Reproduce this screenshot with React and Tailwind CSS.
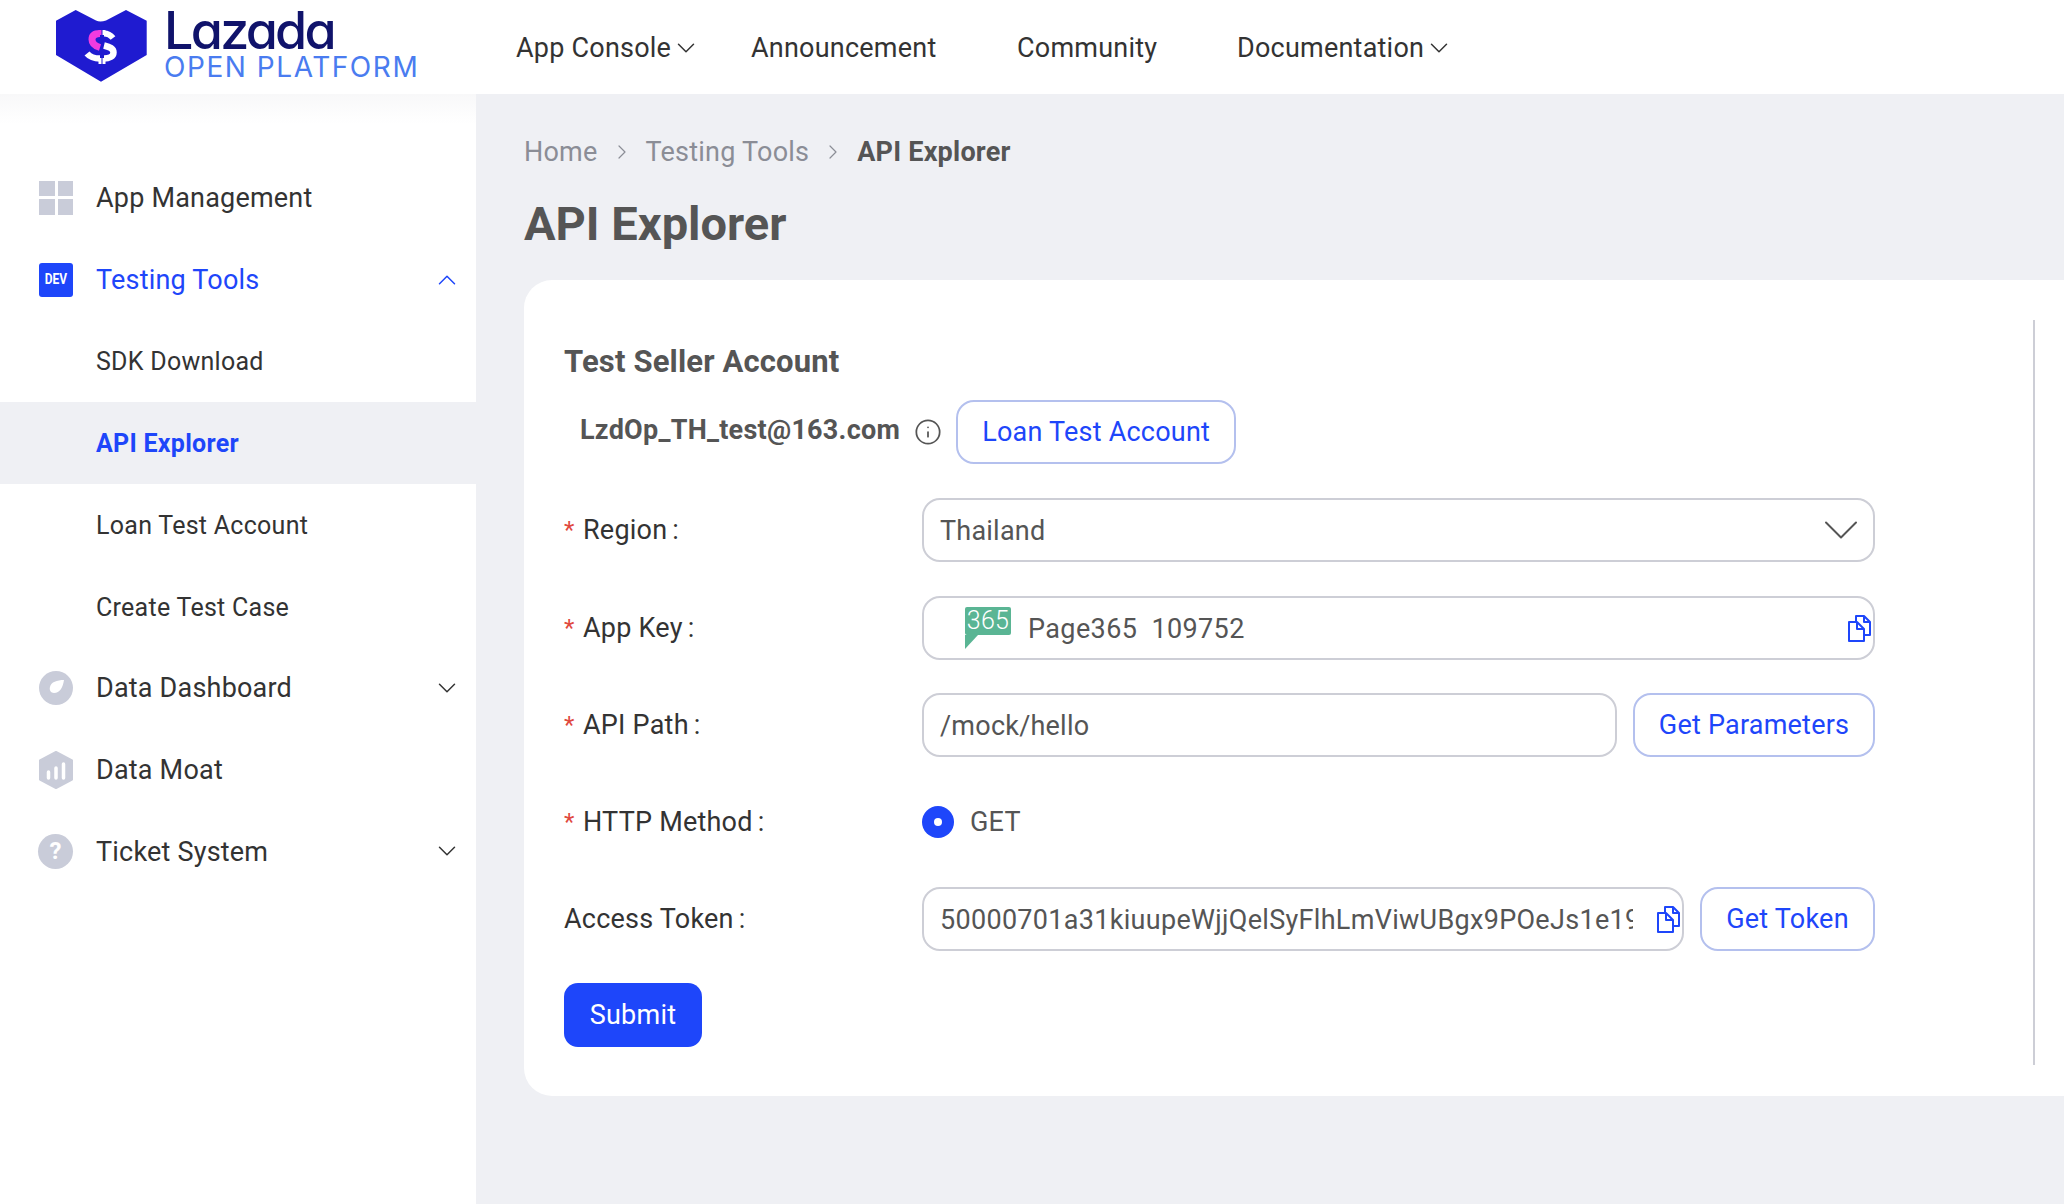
import { ChevronDown, ChevronUp, ChevronRight, Info } from 'lucide-react';

const font = { fontFamily: 'Roboto, sans-serif' };

function CopyIcon() {
    return (
        <svg width="24" height="28" viewBox="0 0 24 28" fill="none" stroke="#1e46fa" strokeWidth="2" strokeLinejoin="round">
            <path d="M9 7V2h8l6 6v13h-6" />
            <path d="M17 2v6h6" />
            <path d="M2 8h8l7 7v12H2z" fill="#fff" />
            <path d="M10 8v7h7" />
        </svg>
    );
}

function LazadaMark() {
    return (
        <svg width="91" height="72" viewBox="0 0 91 72">
            <path d="M0 10.7 L19.7 0 L40 10.5 Q44 12.3 50 10.5 L70 0 L90.7 10.7 L90.7 45 L45 71.7 L0 45 Z" fill="#1f1bd0" />
            <path d="M44 23.5C38 23.5 36 26 36 29.5C36 33.5 39 36 44 37.5" fill="none" stroke="#f23be0" strokeWidth="7" />
            <path d="M44 20v5" stroke="#f23be0" strokeWidth="3" />
            <path d="M48 23.5C52 23.5 55 25.5 57 28" fill="none" stroke="#fff" strokeWidth="6" />
            <path d="M48 20v5" stroke="#fff" strokeWidth="3" />
            <path d="M48 35.5C54 37 57.5 38.5 57.5 42.5C57.5 46.5 53 48.5 48 48.5" fill="none" stroke="#fff" strokeWidth="6.5" />
            <path d="M31 43.5C34 47 38 48.5 44 48.5" fill="none" stroke="#fff" strokeWidth="6.5" />
            <path d="M44 48v6M48 48v6" stroke="#fff" strokeWidth="3" />
        </svg>
    );
}

function GridIcon() {
    return (
        <div className="grid grid-cols-2 gap-[3px] w-[34px] h-[34px]">
            <div className="bg-[#c9ccd9]" />
            <div className="bg-[#c9ccd9]" />
            <div className="bg-[#c9ccd9]" />
            <div className="bg-[#c9ccd9]" />
        </div>
    );
}

function DevIcon() {
    return (
        <div className="w-[34px] h-[34px] rounded-[3px] bg-[#1e46fa] flex items-center justify-center text-white">
            <span className="text-[15px] font-bold scale-x-[0.8]">DEV</span>
        </div>
    );
}

function GaugeIcon() {
    return (
        <svg width="34" height="34" viewBox="0 0 34 34">
            <circle cx="17" cy="17" r="17" fill="#c9ccd9" />
            <path d="M25 9c-7 0-13 2-14 7-1 3 1 6 4 6 6 0 9-6 10-13z" fill="#fff" />
        </svg>
    );
}

function HexIcon() {
    return (
        <svg width="36" height="38" viewBox="0 0 36 38" className="-ml-[1px]">
            <path d="M18 1l16 8.5v19L18 37 2 28.500V9.500z" fill="#c9ccd9" stroke="#c9ccd9" strokeWidth="2" strokeLinejoin="round" />
            <path d="M10.500 21v6M18 17v10M25.500 13v14" stroke="#fff" strokeWidth="3.500" strokeLinecap="round" />
        </svg>
    );
}

function HelpIcon() {
    return (
        <div className="w-[35px] h-[35px] -ml-[1px] rounded-full bg-[#c9ccd9] flex items-center justify-center text-white text-[24px] font-bold">?</div>
    );
}

function SideItem({ icon, label, active, open, chevron }) {
    return (
        <div className="h-[81.7px] flex items-center pr-[14px]">
            <div className="w-[96px] pl-[39px] shrink-0 flex items-center">{icon}</div>
            <span className={`text-[27px] tracking-[0.2px] flex-1 pt-[1px] ${active ? 'text-[#1e46fa]' : 'text-[#333333]'}`}>{label}</span>
            {chevron && (open
                ? <ChevronUp size={30} strokeWidth={1.2} className="text-[#1e46fa]" />
                : <ChevronDown size={30} strokeWidth={1.2} className="text-[#333333]" />)}
        </div>
    );
}

function SubItem({ label, selected }) {
    return (
        <div className={`h-[81.7px] flex items-center pl-[96px] pt-[2px] text-[25px] tracking-[0.27px] ${selected ? 'bg-[#eff0f4] text-[#1e46fa] font-bold' : 'text-[#333333]'}`}>
            {label}
        </div>
    );
}

function Label({ text, required }) {
    return (
        <div className="w-[358px] shrink-0 flex items-center text-[27px] tracking-[0.22px] text-[#333333] h-[64px]">
            {required && <span className="text-[#e0483e] w-[19px] text-[24px]">*</span>}
            <span>{text}</span>
            <span className="ml-[5px]">:</span>
        </div>
    );
}

function OutlineButton({ children, className }) {
    return (
        <button className={`h-[64px] rounded-[18px] border-2 border-[#b4c0ee] bg-white text-[#1e46fa] text-[27px] tracking-[0.22px] ${className}`}>
            {children}
        </button>
    );
}

function Field({ children, className }) {
    return (
        <div className={`h-[64px] pt-[2px] rounded-[18px] border-2 border-[#cdced6] bg-white flex items-center text-[27px] tracking-[0.22px] text-[#555555] ${className}`}>
            {children}
        </div>
    );
}

export default function App() {
    return (
        <div className="w-full h-screen overflow-hidden flex flex-col bg-white" style={font}>
            {/* top bar */}
            <header className="h-[94px] shrink-0 bg-white flex items-center">
                <div className="w-[516px] pl-[56px] flex items-center gap-[17px] shrink-0 mt-[-2px]">
                    <LazadaMark />
                    <div className="flex flex-col -mt-[5px] [font-feature-settings:'cv11'] font-['Inter',sans-serif]">
                        <span className="text-[52px] leading-[46px] font-medium tracking-[-2.7px] text-[#10136b]">Lazada</span>
                        <span className="text-[28px] leading-[26px] tracking-[1.55px] text-[#4a7cf0]">OPEN PLATFORM</span>
                    </div>
                </div>
                <nav className="flex items-center text-[27px] tracking-[0.22px] text-[#333333] mt-[2px]">
                    <span className="w-[235px] flex items-center">App Console <ChevronDown size={30} strokeWidth={1.2} /></span>
                    <span className="w-[266px]">Announcement</span>
                    <span className="w-[220px]">Community</span>
                    <span className="flex items-center">Documentation <ChevronDown size={30} strokeWidth={1.2} /></span>
                </nav>
            </header>

            <div className="flex flex-1 min-h-0">
                {/* sidebar */}
                <aside className="w-[476px] shrink-0 bg-white pt-[63px] bg-gradient-to-b from-[#f8f8f9] to-white to-[30px] bg-no-repeat">
                    <SideItem icon={<GridIcon />} label="App Management" />
                    <SideItem icon={<DevIcon />} label="Testing Tools" active open chevron />
                    <SubItem label="SDK Download" />
                    <SubItem label="API Explorer" selected />
                    <SubItem label="Loan Test Account" />
                    <SubItem label="Create Test Case" />
                    <SideItem icon={<GaugeIcon />} label="Data Dashboard" chevron />
                    <SideItem icon={<HexIcon />} label="Data Moat" />
                    <SideItem icon={<HelpIcon />} label="Ticket System" chevron />
                </aside>

                {/* main */}
                <main className="flex-1 min-w-0 bg-[#eff0f4] pl-[48px]">
                    <div className="flex items-center h-[34px] pt-[41px] box-content text-[27px] tracking-[0.22px] text-[#8b8d96]">
                        <span>Home</span>
                        <ChevronRight size={24} strokeWidth={1.2} className="mx-[12px]" />
                        <span>Testing Tools</span>
                        <ChevronRight size={24} strokeWidth={1.2} className="mx-[12px]" />
                        <span className="font-bold text-[#555555]">API Explorer</span>
                    </div>
                    <h1 className="text-[47px] leading-[56px] font-bold text-[#555555] mt-[27px]">API Explorer</h1>

                    <div className="mt-[28px] h-[816px] bg-white rounded-l-[28px] pl-[40px] pt-[40px]">
                        <div className="w-[1471px] h-[745px] border-r-2 border-[#cdced6]">
                            <div className="w-[1311px] pt-[22px]">
                                <h2 className="text-[31px] tracking-[0.15px] font-bold text-[#555555] leading-[40px]">Test Seller Account</h2>
                                <div className="flex items-center h-[64px] mt-[18px] mb-[34px]">
                                    <span className="ml-[16px] text-[27px] tracking-[0.25px] font-bold text-[#555555] -mt-[3px]">LzdOp_TH_test@163.com</span>
                                    <Info size={28} strokeWidth={1.5} className="ml-[14px] text-[#555555]" />
                                    <OutlineButton className="ml-[14px] w-[280px]">Loan Test Account</OutlineButton>
                                </div>

                                <div className="flex items-center mb-[34px]">
                                    <Label text="Region" required />
                                    <Field className="flex-1 pl-[16px] pr-[2px] justify-between">
                                        <span>Thailand</span>
                                        <ChevronDown size={60} strokeWidth={0.8} className="text-[#555555] -mt-[2px]" />
                                    </Field>
                                </div>

                                <div className="flex items-center mb-[33px]">
                                    <Label text="App Key" required />
                                    <Field className="flex-1 pl-[41px] pr-[2px] justify-between">
                                        <div className="flex items-center gap-[17px] -mt-[2px]">
                                            <div className="relative w-[46px] h-[42px]">
                                                <div className="absolute left-0 top-0 w-[46px] h-[28px] bg-[#5ab594] rounded-[2px] text-white text-[25px] leading-[27px] font-light text-center">365</div>
                                                <div className="absolute left-0 top-[28px] w-0 h-0 border-l-[13px] border-l-[#5ab594] border-b-[14px] border-b-transparent" />
                                            </div>
                                            <span className="tracking-[0.38px] pt-[2px]">Page365&nbsp;&nbsp;109752</span>
                                        </div>
                                        <span className="-mt-[2px]"><CopyIcon /></span>
                                    </Field>
                                </div>

                                <div className="flex items-center mb-[33px]">
                                    <Label text="API Path" required />
                                    <Field className="w-[695px] pl-[16px]">/mock/hello</Field>
                                    <OutlineButton className="ml-[16px] flex-1">Get Parameters</OutlineButton>
                                </div>

                                <div className="flex items-center mt-[1px] mb-[33px]">
                                    <Label text="HTTP Method" required />
                                    <div className="flex items-center h-[64px] gap-[16px] text-[27px] tracking-[0.22px] text-[#555555]">
                                        <div className="w-[32px] h-[32px] rounded-full bg-[#1e46fa] flex items-center justify-center">
                                            <div className="w-[8px] h-[8px] rounded-full bg-white" />
                                        </div>
                                        GET
                                    </div>
                                </div>

                                <div className="flex items-center mb-[32px]">
                                    <Label text="Access Token" />
                                    <Field className="w-[762px] pl-[16px] pr-[2px]">
                                        <span className="w-[695px] overflow-hidden whitespace-nowrap tracking-[0.3px]">50000701a31kiuupeWjjQelSyFlhLmViwUBgx9POeJs1e19</span>
                                        <span className="ml-[23px] -mt-[2px]"><CopyIcon /></span>
                                    </Field>
                                    <OutlineButton className="ml-[16px] flex-1">Get Token</OutlineButton>
                                </div>

                                <button className="h-[64px] w-[138px] rounded-[14px] bg-[#1e46fa] text-white text-[27px] tracking-[0.22px]">Submit</button>
                            </div>
                        </div>
                    </div>
                </main>
            </div>
        </div>
    );
}
